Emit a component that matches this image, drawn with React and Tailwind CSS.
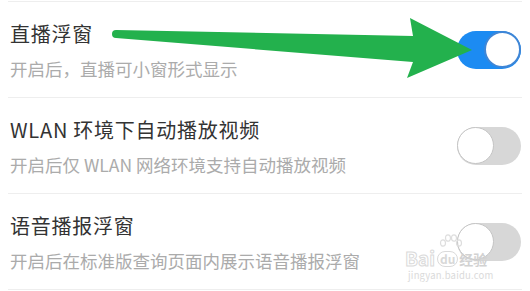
import React from "react";

// Settings list with three switch rows, green annotation arrow on top

const rows = [
  { title: "直播浮窗", desc: "开启后，直播可小窗形式显示", on: true },
  { title: "WLAN 环境下自动播放视频", desc: "开启后仅 WLAN 网络环境支持自动播放视频", on: false },
  { title: "语音播报浮窗", desc: "开启后在标准版查询页面内展示语音播报浮窗", on: false },
];

function Toggle({ on }) {
  if (on) {
    return (
      <div className="flex h-[38px] w-[64px] items-center justify-end rounded-full bg-[#1c8bf2]">
        <div className="h-[37px] w-[37px] rounded-full border-2 border-[#3f86d6] bg-white" />
      </div>
    );
  }
  return (
    <div className="flex h-[38px] w-[64px] items-center justify-start rounded-full bg-[#d7d7d7]">
      <div className="h-[37px] w-[37px] rounded-full border border-[#c4c4c4] bg-white" />
    </div>
  );
}

export default function App() {
  return (
    <div className="relative h-[291px] w-[530px] overflow-hidden bg-white font-['Noto_Sans_CJK_SC','Noto_Sans',sans-serif]">
      <div className="mx-2 mt-[1px] border-t border-[#eeeeee]">
        {rows.map((r, i) => (
          <div key={i} className="flex h-[96px] items-center justify-between border-b border-[#eeeeee] pl-[2px] pr-[1px]">
            <div className="flex h-full flex-col pt-[19px]">
              <div className="h-[26px] text-[20px] leading-[26px] tracking-[0.75px] text-[#333333]">{r.title}</div>
              <div className="mt-[12px] h-[20px] text-[17.5px] leading-[20px] text-[#ababab]">{r.desc}</div>
            </div>
            <Toggle on={r.on} />
          </div>
        ))}
      </div>

      {/* annotation arrow */}
      <svg className="absolute left-0 top-0" width="530" height="291" viewBox="0 0 530 291">
        <circle cx="116" cy="34" r="4" fill="#23b14d" />
        <polygon
          points="116,30 413,36 410,18 472,50 407,78 413,62 116,38"
          fill="#23b14d"
        />
      </svg>

      {/* watermark */}
      <svg className="absolute left-[438px] top-[234px]" width="26" height="20" viewBox="0 0 26 20">
        <g fill="none" stroke="#dedede" strokeWidth="1.2">
          <ellipse cx="5" cy="9" rx="2.5" ry="3.2" />
          <ellipse cx="10" cy="4" rx="2.5" ry="3.2" />
          <ellipse cx="16" cy="4" rx="2.5" ry="3.2" />
          <ellipse cx="21" cy="9" rx="2.5" ry="3.2" />
        </g>
      </svg>
      <div className="absolute left-[405px] top-[249px] flex flex-col items-start">
        <div className="flex h-[18px] items-end">
          <span className="text-[19px] font-bold leading-[18px] text-white [-webkit-text-stroke:1px_#dadada]">Bai</span>
          <span className="ml-[2px] rounded-full border border-[#dadada] px-[2px] text-[12px] font-bold leading-[14px] text-[#d8d8d8]">du</span>
          <span className="ml-[1px] text-[14px] font-bold leading-[16px] text-[#d2d2d2]">经验</span>
        </div>
        <div className="mt-[3px] pl-[3px] text-[9.5px] leading-[11px] tracking-[0.2px] text-[#dadada]">jingyan.baidu.com</div>
      </div>
    </div>
  );
}
